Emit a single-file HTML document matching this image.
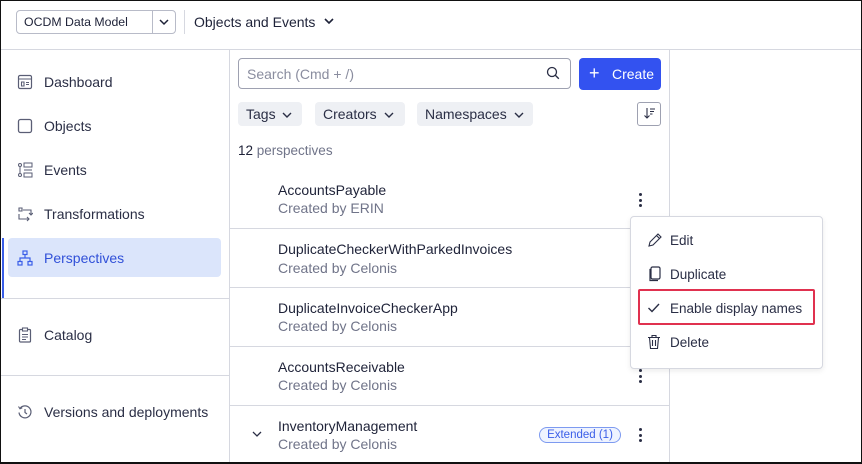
<!DOCTYPE html>
<html><head><style>
*{box-sizing:border-box;margin:0;padding:0}
body{width:862px;height:464px;overflow:hidden;font-family:"Liberation Sans",sans-serif;color:#1e2238;background:#fff;position:relative}
.frame{position:absolute;left:0;top:0;width:862px;height:464px;border:1px solid #111;border-bottom:2px solid #111}
.abs{position:absolute}
.hline{position:absolute;height:1px;background:#d6d8e0}
.vline{position:absolute;width:1px;background:#d6d8e0}
.nav{position:absolute;left:44px;font-size:14px;color:#2a2e45}
.ico{position:absolute;left:17px}
.chip{position:absolute;top:102px;height:24px;background:#eef0f4;border-radius:4px;font-size:14px;padding:4px 8px;color:#2a2e45}
.name{position:absolute;left:278px;font-size:14px;color:#1e2238}
.sub{position:absolute;left:278px;font-size:14px;color:#707489}
.dots{position:absolute;left:639px;width:4px}
.dots i{display:block;width:3px;height:3px;border-radius:2px;background:#2a2e45;margin-bottom:2.5px}
.mi{position:absolute;left:670px;font-size:13.5px;color:#2a2e45}
</style></head><body>
<!-- header -->
<div class="abs" style="left:16px;top:10px;width:160px;height:24px;border:1px solid #b8bbc8;border-radius:4px"></div>
<div class="abs" style="left:24px;top:15px;font-size:12.3px;color:#1e2238">OCDM Data Model</div>
<div class="vline" style="left:152px;top:11px;height:22px;background:#b8bbc8"></div>
<svg class="abs" style="left:158px;top:17px" width="12" height="10"><path d="M2 3l4 4 4-4" fill="none" stroke="#1e2238" stroke-width="1.5"/></svg>
<div class="vline" style="left:184px;top:10px;height:24px"></div>
<div class="abs" style="left:194px;top:14px;font-size:14px;color:#1e2238">Objects and Events</div>
<svg class="abs" style="left:323px;top:16px" width="12" height="10"><path d="M2 3l4 4 4-4" fill="none" stroke="#1e2238" stroke-width="1.6"/></svg>
<div class="hline" style="left:0;top:49px;width:862px"></div>
<!-- sidebar -->
<div class="vline" style="left:229px;top:49px;height:415px"></div>
<svg class="ico" style="top:74px" width="16" height="16"><rect x="1.5" y="1.5" width="13" height="13" rx="1.5" fill="none" stroke="#5a5e75" stroke-width="1.2"/><path d="M2 5h12M4.5 8h2.5v4h-2.5zM9 8.5h3M9 10.5h3" fill="none" stroke="#5a5e75" stroke-width="1.1"/></svg>
<div class="nav" style="top:74px">Dashboard</div>
<svg class="ico" style="top:118px" width="16" height="16"><rect x="1.5" y="1.5" width="13" height="13" rx="2" fill="none" stroke="#5a5e75" stroke-width="1.3"/></svg>
<div class="nav" style="top:118px">Objects</div>
<svg class="ico" style="top:162px" width="16" height="16"><circle cx="3" cy="3" r="1.5" fill="none" stroke="#5a5e75"/><circle cx="3" cy="13" r="1.5" fill="none" stroke="#5a5e75"/><rect x="7" y="1" width="8" height="4" fill="none" stroke="#5a5e75"/><rect x="7" y="11" width="8" height="4" fill="none" stroke="#5a5e75"/><path d="M3 5v6M7 8h8" stroke="#5a5e75"/></svg>
<div class="nav" style="top:162px">Events</div>
<svg class="ico" style="top:206px" width="16" height="16"><path d="M2 2h3v3H2zM2 8v5h10M10 11l2 2-2 2M6 4h8v5M12 7l2 2 2-2" fill="none" stroke="#5a5e75" stroke-width="1.1"/></svg>
<div class="nav" style="top:206px">Transformations</div>
<div class="abs" style="left:8px;top:238px;width:213px;height:39px;background:#dbe5fb;border-radius:4px"></div>
<div class="abs" style="left:2px;top:238px;width:2px;height:60px;background:#3a5ee8"></div>
<svg class="ico" style="top:250px" width="16" height="16"><rect x="6" y="1" width="4" height="3.5" fill="none" stroke="#3a5ee8" stroke-width="1.2"/><rect x="1" y="11.5" width="4" height="3.5" fill="none" stroke="#3a5ee8" stroke-width="1.2"/><rect x="11" y="11.5" width="4" height="3.5" fill="none" stroke="#3a5ee8" stroke-width="1.2"/><path d="M8 4.5V8M3 11.5V8h10v3.5" fill="none" stroke="#3a5ee8" stroke-width="1.2"/></svg>
<div class="nav" style="top:250px;color:#3050d8">Perspectives</div>
<div class="hline" style="left:0;top:298px;width:229px"></div>
<svg class="ico" style="top:327px" width="16" height="16"><rect x="2.5" y="2.5" width="11" height="12.5" rx="1" fill="none" stroke="#5a5e75" stroke-width="1.2"/><rect x="5.5" y="1" width="5" height="3" fill="#fff" stroke="#5a5e75" stroke-width="1.1"/><path d="M5 7.5h6M5 10h6M5 12.5h4" stroke="#5a5e75"/></svg>
<div class="nav" style="top:327px">Catalog</div>
<div class="hline" style="left:0;top:375px;width:229px"></div>
<svg class="ico" style="top:404px" width="16" height="16"><path d="M3 4.5A6 6 0 1 1 2 8.5" fill="none" stroke="#5a5e75" stroke-width="1.2"/><path d="M1.5 2.5l1.5 2.3 2.3-1" fill="none" stroke="#5a5e75" stroke-width="1.1"/><path d="M8 5v3.5l2 1.5" fill="none" stroke="#5a5e75" stroke-width="1.2"/></svg>
<div class="nav" style="top:404px">Versions and deployments</div>
<!-- main -->
<div class="vline" style="left:669px;top:49px;height:415px"></div>
<div class="abs" style="left:238px;top:58px;width:333px;height:31px;border:1px solid #9ea1b1;border-radius:4px"></div>
<div class="abs" style="left:247px;top:66px;font-size:14px;color:#8a8d9f">Search (Cmd + /)</div>
<svg class="abs" style="left:546px;top:66px" width="14" height="14"><circle cx="6" cy="6" r="4.5" fill="none" stroke="#2a2e45" stroke-width="1.3"/><path d="M9.3 9.3l3.5 3.5" stroke="#2a2e45" stroke-width="1.4"/></svg>
<div class="abs" style="left:579px;top:58px;width:82px;height:32px;background:#3352f0;border-radius:4px"></div>
<div class="abs" style="left:589px;top:63px;font-size:18px;color:#fff">+</div>
<div class="abs" style="left:612px;top:66px;font-size:14px;color:#fff">Create</div>
<div class="chip" style="left:238px;width:64px">Tags <svg width="10" height="8" style="margin-left:3px"><path d="M1 2l4 4 4-4" fill="none" stroke="#2a2e45" stroke-width="1.4"/></svg></div>
<div class="chip" style="left:315px;width:90px">Creators <svg width="10" height="8" style="margin-left:3px"><path d="M1 2l4 4 4-4" fill="none" stroke="#2a2e45" stroke-width="1.4"/></svg></div>
<div class="chip" style="left:417px;width:116px">Namespaces <svg width="10" height="8" style="margin-left:3px"><path d="M1 2l4 4 4-4" fill="none" stroke="#2a2e45" stroke-width="1.4"/></svg></div>
<div class="abs" style="left:637px;top:102px;width:24px;height:24px;border:1px solid #9ea1b1;border-radius:3px"></div>
<svg class="abs" style="left:643px;top:107px" width="13" height="13"><path d="M4 1v10M1.5 8.5L4 11l2.5-2.5M7 2h5M7 4.5h4M7 7h2.5" fill="none" stroke="#2a2e45" stroke-width="1.1"/></svg>
<div class="abs" style="left:238px;top:143px;font-size:13.5px;color:#707489"><b style="font-weight:normal;color:#1e2238">12</b> perspectives</div>

<div class="name" style="top:182px">AccountsPayable</div>
<div class="sub" style="top:200px">Created by ERIN</div>
<div class="dots" style="top:193px"><i></i><i></i><i></i></div>
<div class="hline" style="left:229px;top:228px;width:440px"></div>
<div class="name" style="top:241px">DuplicateCheckerWithParkedInvoices</div>
<div class="sub" style="top:260px">Created by Celonis</div>
<div class="hline" style="left:229px;top:287px;width:440px"></div>
<div class="name" style="top:300px">DuplicateInvoiceCheckerApp</div>
<div class="sub" style="top:318px">Created by Celonis</div>
<div class="hline" style="left:229px;top:346px;width:440px"></div>
<div class="name" style="top:359px">AccountsReceivable</div>
<div class="sub" style="top:377px">Created by Celonis</div>
<div class="dots" style="top:369px"><i></i><i></i><i></i></div>
<div class="hline" style="left:229px;top:405px;width:440px"></div>
<svg class="abs" style="left:252px;top:430px" width="10" height="8"><path d="M1 2l4 4 4-4" fill="none" stroke="#2a2e45" stroke-width="1.3"/></svg>
<div class="name" style="top:418px">InventoryManagement</div>
<div class="sub" style="top:436px">Created by Celonis</div>
<div class="abs" style="left:539px;top:427px;width:82px;height:16px;border:1px solid #7d9af0;border-radius:8px;background:#eef3ff;font-size:11.5px;color:#3a5ee8;text-align:center;line-height:14px">Extended (1)</div>
<div class="dots" style="top:428px"><i></i><i></i><i></i></div>
<!-- menu -->
<div class="abs" style="left:630px;top:216px;width:193px;height:153px;background:#fff;border:1px solid #d6d8e0;border-radius:4px;box-shadow:0 2px 6px rgba(0,0,0,.08)"></div>
<svg class="abs" style="left:647px;top:232px" width="16" height="16"><path d="M2 14l1-4 8-8 3 3-8 8z M9.5 3.5l3 3" fill="none" stroke="#2a2e45" stroke-width="1.1"/></svg>
<div class="mi" style="top:233px">Edit</div>
<svg class="abs" style="left:648px;top:266px" width="14" height="16"><rect x="3" y="1" width="9" height="12" rx="1.5" fill="none" stroke="#2a2e45" stroke-width="1.2"/><path d="M3 3.5H2v11h8" fill="none" stroke="#2a2e45" stroke-width="1.2"/></svg>
<div class="mi" style="top:267px">Duplicate</div>
<div class="abs" style="left:638px;top:289px;width:177px;height:36px;border:2px solid #e0314f;border-radius:2px"></div>
<svg class="abs" style="left:647px;top:302px" width="14" height="12"><path d="M1.5 6l3.5 3.5L12 2" fill="none" stroke="#2a2e45" stroke-width="1.4"/></svg>
<div class="mi" style="top:301px">Enable display names</div>
<svg class="abs" style="left:647px;top:334px" width="14" height="16"><path d="M1 3.5h12M5 3.5V1.5h4v2M2.5 3.5l1 11h7l1-11M5.5 6v6M8.5 6v6" fill="none" stroke="#2a2e45" stroke-width="1.1"/></svg>
<div class="mi" style="top:335px">Delete</div>
<div class="frame"></div>
</body></html>
